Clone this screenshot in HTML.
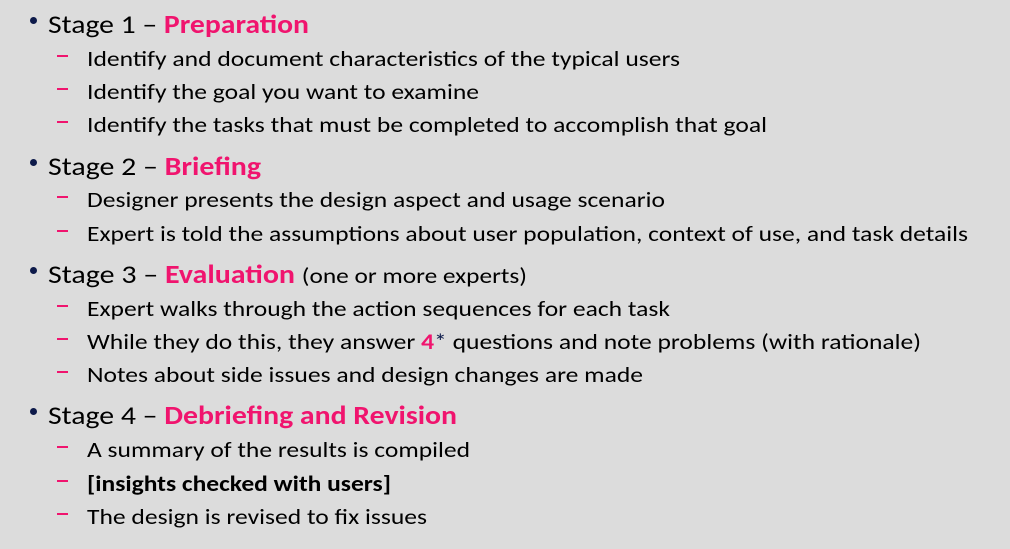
<!DOCTYPE html>
<html><head><meta charset="utf-8"><style>
html,body{margin:0;padding:0;}
body{width:1010px;height:549px;background:#dcdcdc;position:relative;overflow:hidden;font-family:"Carlito","Liberation Sans",sans-serif;color:#000;}
.l{position:absolute;white-space:nowrap;line-height:30px;transform-origin:0 50%;}
.h{font-size:26px;left:48px;}
.s{font-size:22px;left:87px;}
.p{color:#f0146e;font-weight:bold;}
.sm{font-size:22px;}
.b{position:absolute;width:7px;height:7px;border-radius:50%;background:#0d1a4a;left:30px;}
.d{position:absolute;width:11px;height:2px;background:#f0146e;left:57px;}
</style></head><body>
<div class="b" style="top:17px"></div>
<div class="l h" style="top:9px">Stage 1 – <span class="p">Preparation</span></div>
<div class="d" style="top:55px"></div><div class="l s" style="top:44px">Identify and document characteristics of the typical users</div>
<div class="d" style="top:88px"></div><div class="l s" style="top:77px">Identify the goal you want to examine</div>
<div class="d" style="top:121px"></div><div class="l s" style="top:110px">Identify the tasks that must be completed to accomplish that goal</div>

<div class="b" style="top:159px"></div>
<div class="l h" style="top:151px">Stage 2 – <span class="p">Briefing</span></div>
<div class="d" style="top:196px"></div><div class="l s" style="top:185px">Designer presents the design aspect and usage scenario</div>
<div class="d" style="top:230px"></div><div class="l s" style="top:219px">Expert is told the assumptions about user population, context of use, and task details</div>

<div class="b" style="top:267px"></div>
<div class="l h" style="top:259px">Stage 3 – <span class="p">Evaluation</span> <span class="sm">(one or more experts)</span></div>
<div class="d" style="top:305px"></div><div class="l s" style="top:294px">Expert walks through the action sequences for each task</div>
<div class="d" style="top:338px"></div><div class="l s" style="top:327px">While they do this, they answer <span class="p">4</span><span style="color:#0d1a4a">*</span> questions and note problems (with rationale)</div>
<div class="d" style="top:371px"></div><div class="l s" style="top:360px">Notes about side issues and design changes are made</div>

<div class="b" style="top:408px"></div>
<div class="l h" style="top:400px">Stage 4 – <span class="p">Debriefing and Revision</span></div>
<div class="d" style="top:446px"></div><div class="l s" style="top:435px">A summary of the results is compiled</div>
<div class="d" style="top:480px"></div><div class="l s" style="top:469px;font-weight:bold">[insights checked with users]</div>
<div class="d" style="top:513px"></div><div class="l s" style="top:502px">The design is revised to fix issues</div>
<script>
var R=[309,680,479,767,261,665,968,527,670,921,643,457,470,391,427];
var els=document.querySelectorAll('.l');
for(var i=0;i<els.length;i++){var e=els[i];var w=e.getBoundingClientRect().width;var t=R[i]-e.offsetLeft;if(w>0)e.style.transform='scaleX('+(t/w)+')';}
</script>
</body></html>
